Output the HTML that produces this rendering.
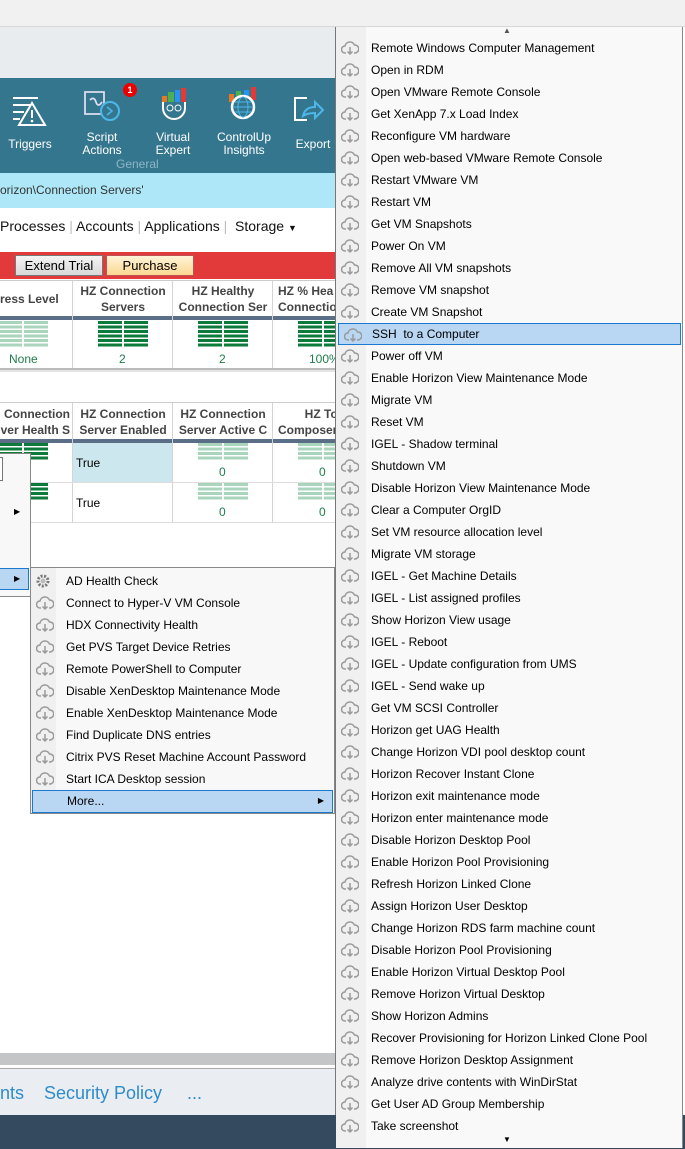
<!DOCTYPE html>
<html><head><meta charset="utf-8"><style>
*{margin:0;padding:0;box-sizing:border-box}
body{width:685px;height:1149px;position:relative;overflow:hidden;background:#fff;font-family:"Liberation Sans",sans-serif;font-size:12px;color:#000}
.a{position:absolute}
.bar{position:absolute;width:50px;height:27px;background:repeating-linear-gradient(#0b7a3a 0 3px,#fff 3px 4.5px)}
.bar.l{background:repeating-linear-gradient(#a9d5bc 0 3px,#fff 3px 4.5px)}
.bar:after{content:"";position:absolute;left:24px;top:0;width:2px;height:100%;background:#fff}
.hd{position:absolute;text-align:center;font-weight:bold;color:#444;font-size:12px;line-height:16px}
.vl{position:absolute;width:1px;background:#d4d4d4}
.mi{position:absolute;left:0;right:0;height:22px;line-height:22px;font-size:12px;color:#000}
.mi svg{position:absolute;left:5px;top:4px}
.sel{background:#b9d6f3;border:1px solid #1b7ad0}
.tb{color:#fff;font-size:12px;text-align:center;line-height:13px}
</style></head><body>
<div class="a" style="left:0;top:0;width:685px;height:27px;background:#f1f1f1;border-bottom:1px solid #d8d8d8"></div>
<div class="a" style="left:0;top:27px;width:335px;height:51px;background:#e9ecef"></div>
<div class="a" style="left:0;top:78px;width:335px;height:95px;background:#35768f"></div>
<svg class="a" style="left:10px;top:95px" width="38" height="36"><g stroke="#fff" stroke-width="2" fill="none"><line x1="3" y1="3" x2="28" y2="3"/><line x1="3" y1="10" x2="20" y2="10"/><line x1="3" y1="17" x2="14" y2="17"/><line x1="3" y1="24" x2="10" y2="24"/><path d="M22 8 L35 30 H9 Z"/><line x1="22" y1="15" x2="22" y2="23"/></g><circle cx="22" cy="26" r="1.3" fill="#fff"/></svg>
<div class="a tb" style="left:5px;top:138px;width:50px">Triggers</div>
<svg class="a" style="left:82px;top:88px" width="40" height="36"><g stroke="#dde" stroke-width="1.8" fill="none"><path d="M3 4 H22 V26 H3 Z"/><path d="M8 12 q4 -4 6 2 q2 6 6 0"/></g><circle cx="28" cy="23" r="9" fill="#35768f" stroke="#4cb7e8" stroke-width="2"/><path d="M25 19 l5 4 l-5 4" stroke="#4cb7e8" stroke-width="1.6" fill="none"/></svg>
<div class="a" style="left:123px;top:83px;width:14px;height:14px;border-radius:7px;background:#e00;color:#fff;font-size:9px;font-weight:bold;text-align:center;line-height:14px">1</div>
<div class="a tb" style="left:76px;top:131px;width:52px">Script<br>Actions</div>
<div class="a" style="left:116px;top:157px;width:40px;color:#8db6c6;font-size:12px">General</div>
<svg class="a" style="left:158px;top:86px" width="34" height="36"><rect x="4" y="10" width="5" height="6" fill="#e87722"/><rect x="10" y="6" width="6" height="10" fill="#4caf50"/><rect x="17" y="4" width="5" height="12" fill="#2196f3"/><rect x="23" y="2" width="5" height="14" fill="#e53935"/><path d="M5 16 v6 a11 11 0 0 0 22 0 v-6" stroke="#fff" stroke-width="2" fill="none"/><circle cx="12" cy="22" r="3" stroke="#fff" fill="none"/><circle cx="20" cy="22" r="3" stroke="#fff" fill="none"/></svg>
<div class="a tb" style="left:148px;top:131px;width:50px">Virtual<br>Expert</div>
<svg class="a" style="left:226px;top:86px" width="36" height="36"><rect x="3" y="8" width="5" height="8" fill="#e87722"/><rect x="10" y="5" width="5" height="5" fill="#4caf50"/><rect x="18" y="4" width="5" height="6" fill="#2196f3"/><rect x="25" y="1" width="5" height="13" fill="#e53935"/><circle cx="17" cy="21" r="11" fill="#35768f" stroke="#fff" stroke-width="2.5"/><g stroke="#4cb7e8" fill="none"><ellipse cx="17" cy="21" rx="5" ry="10"/><line x1="7" y1="21" x2="27" y2="21"/><line x1="9" y1="16" x2="25" y2="16"/><line x1="9" y1="26" x2="25" y2="26"/></g></svg>
<div class="a tb" style="left:212px;top:131px;width:64px">ControlUp<br>Insights</div>
<svg class="a" style="left:293px;top:96px" width="36" height="34"><path d="M14 2 H2 V24 H14" stroke="#fff" stroke-width="2" fill="none"/><path d="M10 20 q2 -9 12 -9 v-5 l8 8 l-8 8 v-5 q-8 0 -12 3z" stroke="#4cb7e8" stroke-width="2" fill="none"/></svg>
<div class="a tb" style="left:290px;top:138px;width:46px">Export</div>
<div class="a" style="left:0;top:173px;width:335px;height:35px;background:#aee8f8;line-height:35px;color:#333;font-size:12px">orizon\Connection Servers'</div>
<div class="a" style="left:0;top:218px;font-size:14px;color:#111;white-space:nowrap">Processes <span style="color:#bbb">|</span> Accounts <span style="color:#bbb">|</span> Applications <span style="color:#bbb">|</span> &nbsp;Storage <span style="font-size:9px">▼</span></div>
<div class="a" style="left:0;top:252px;width:335px;height:27px;background:#e2393a"></div>
<div class="a" style="left:15px;top:255px;width:88px;height:21px;background:linear-gradient(#f4f4f4,#d8d8d8);border:1px solid #777;font-size:13px;text-align:center;line-height:19px">Extend Trial</div>
<div class="a" style="left:106px;top:255px;width:88px;height:21px;background:linear-gradient(#fff4d8,#fbd891);border:1px solid #b55;font-size:13px;text-align:center;line-height:19px">Purchase</div>
<div class="a" style="left:0;top:280px;width:335px;height:1px;background:#ccc"></div>
<div class="hd" style="left:0;top:291px;width:72px;text-align:left;white-space:nowrap">ress Level</div>
<div class="hd" style="left:73px;top:283px;width:100px">HZ Connection<br>Servers</div>
<div class="hd" style="left:173px;top:283px;width:100px">HZ Healthy<br>Connection Ser</div>
<div class="hd" style="left:273px;top:283px;width:100px;text-align:left;padding-left:5px;white-space:nowrap">HZ % Hea<br>Connectio</div>
<div class="a" style="left:0;top:316px;width:335px;height:4px;background:#5a6e87"></div>
<div class="vl" style="left:72px;top:281px;height:88px"></div><div class="vl" style="left:172px;top:281px;height:88px"></div><div class="vl" style="left:272px;top:281px;height:88px"></div>
<div class="bar l" style="left:-2px;top:321px"></div>
<div class="bar" style="left:98px;top:321px"></div><div class="bar" style="left:198px;top:321px"></div><div class="bar" style="left:298px;top:321px"></div>
<div class="a" style="left:9px;top:352px;color:#1d7d4a">None</div>
<div class="a" style="left:119px;top:352px;color:#1d7d4a">2</div>
<div class="a" style="left:219px;top:352px;color:#1d7d4a">2</div>
<div class="a" style="left:309px;top:352px;color:#1d7d4a">100%</div>
<div class="a" style="left:0;top:368px;width:335px;height:2px;background:#bbb"></div>
<div class="a" style="left:0;top:370px;width:335px;height:2px;background:#e4e4e4"></div>
<div class="a" style="left:0;top:402px;width:335px;height:1px;background:#ccc"></div>
<div class="hd" style="left:0;top:406px;width:70px;text-align:right;white-space:nowrap;overflow:hidden">Connection<br>ver Health S</div>
<div class="hd" style="left:73px;top:406px;width:100px">HZ Connection<br>Server Enabled</div>
<div class="hd" style="left:173px;top:406px;width:100px">HZ Connection<br>Server Active C</div>
<div class="hd" style="left:273px;top:406px;width:70px;text-align:left;padding-left:5px;white-space:nowrap">&nbsp;&nbsp;&nbsp;&nbsp;&nbsp;&nbsp;&nbsp;&nbsp;HZ Tot<br>Composer</div>
<div class="a" style="left:0;top:439px;width:335px;height:4px;background:#5a6e87"></div>
<div class="a" style="left:73px;top:443px;width:99px;height:39px;background:#cde7ee"></div>
<div class="vl" style="left:72px;top:403px;height:119px"></div><div class="vl" style="left:172px;top:403px;height:119px"></div><div class="vl" style="left:272px;top:403px;height:119px"></div>
<div class="a" style="left:0;top:482px;width:335px;height:1px;background:#ddd"></div>
<div class="a" style="left:0;top:522px;width:335px;height:1px;background:#ddd"></div>
<div class="bar" style="left:-2px;top:443px;height:18px"></div><div class="bar" style="left:-2px;top:483px;height:18px"></div>
<div class="a" style="left:76px;top:456px">True</div><div class="a" style="left:76px;top:496px">True</div>
<div class="bar l" style="left:198px;top:443px;height:18px"></div><div class="bar l" style="left:298px;top:443px;height:18px"></div>
<div class="bar l" style="left:198px;top:483px;height:18px"></div><div class="bar l" style="left:298px;top:483px;height:18px"></div>
<div class="a" style="left:219px;top:465px;color:#1d7d4a">0</div><div class="a" style="left:319px;top:465px;color:#1d7d4a">0</div>
<div class="a" style="left:219px;top:505px;color:#1d7d4a">0</div><div class="a" style="left:319px;top:505px;color:#1d7d4a">0</div>
<div class="a" style="left:-1px;top:453px;width:32px;height:144px;background:#f8f8f8;border:1px solid #888"></div>
<div class="a" style="left:-3px;top:457px;width:6px;height:24px;border:1px solid #777;background:#fff"></div>
<div class="a" style="left:14px;top:507px;font-size:8px">▶</div>
<div class="a" style="left:-1px;top:568px;width:30px;height:22px;background:#b9d6f3;border:1px solid #1b7ad0"></div>
<div class="a" style="left:14px;top:574px;font-size:8px">▶</div>
<div class="a" style="left:30px;top:567px;width:305px;height:247px;background:#f8f8f8;border:1px solid #888">
<div class="a" style="left:0;top:0;width:25px;height:245px;background:#f0f0f0"></div>
<div id="sub"></div>
</div>
<div class="a" style="left:335px;top:27px;width:1px;height:1090px;background:#777"></div>
<div class="a" style="left:0;top:1053px;width:335px;height:12px;background:#c4c5c7"></div>
<div class="a" style="left:0;top:1068px;width:335px;height:1px;background:#aaa"></div>
<div class="a" style="left:0;top:1069px;width:335px;height:46px;background:#eaeef2"></div>
<div class="a" style="left:0;top:1083px;font-size:18px;color:#2d8cc9;white-space:nowrap">nts&nbsp;&nbsp;&nbsp; Security Policy&nbsp;&nbsp;&nbsp;&nbsp; ...</div>
<div class="a" style="left:0;top:1115px;width:685px;height:34px;background:#334a5f"></div>
<div class="a" style="left:336px;top:27px;width:347px;height:1121px;background:#f9f9f9;border-right:1px solid #888">
<div class="a" style="left:0;top:0;width:30px;height:1121px;background:#f0f0f0"></div>
<div class="a" style="left:167px;top:-1px;font-size:8px;color:#555">▲</div>
<div class="a" style="left:167px;top:1108px;font-size:8px;color:#000">▼</div>
<div id="big" class="a" style="left:0;top:10px;width:346px"></div>
</div>
<script>
var ic='<svg width="18" height="15" viewBox="0 0 18 15"><path d="M5 12 H4 a3.5 3.5 0 0 1 0-7 a5 5 0 0 1 9.5-1 a3.5 3.5 0 0 1 0.5 8 H13" fill="none" stroke="#999" stroke-width="1.5"/><path d="M9 6 v7 M6.5 10.5 l2.5 2.5 l2.5-2.5" fill="none" stroke="#999" stroke-width="1.5"/></svg>';
var big=["Remote Windows Computer Management","Open in RDM","Open VMware Remote Console","Get XenApp 7.x Load Index","Reconfigure VM hardware","Open web-based VMware Remote Console","Restart VMware VM","Restart VM","Get VM Snapshots","Power On VM","Remove All VM snapshots","Remove VM snapshot","Create VM Snapshot","SSH&nbsp; to a Computer","Power off VM","Enable Horizon View Maintenance Mode","Migrate VM","Reset VM","IGEL - Shadow terminal","Shutdown VM","Disable Horizon View Maintenance Mode","Clear a Computer OrgID","Set VM resource allocation level","Migrate VM storage","IGEL - Get Machine Details","IGEL - List assigned profiles","Show Horizon View usage","IGEL - Reboot","IGEL - Update configuration from UMS","IGEL - Send wake up","Get VM SCSI Controller","Horizon get UAG Health","Change Horizon VDI pool desktop count","Horizon Recover Instant Clone","Horizon exit maintenance mode","Horizon enter maintenance mode","Disable Horizon Desktop Pool","Enable Horizon Pool Provisioning","Refresh Horizon Linked Clone","Assign Horizon User Desktop","Change Horizon RDS farm machine count","Disable Horizon Pool Provisioning","Enable Horizon Virtual Desktop Pool","Remove Horizon Virtual Desktop","Show Horizon Admins","Recover Provisioning for Horizon Linked Clone Pool","Remove Horizon Desktop Assignment","Analyze drive contents with WinDirStat","Get User AD Group Membership","Take screenshot"];
var h="";big.forEach(function(t,i){h+='<div class="mi'+(i==13?' sel':'')+'" style="top:'+(i*22)+'px;'+(i==13?'left:2px;right:1px;':'')+'">'+ic+'<span style="position:absolute;left:'+(i==13?33:35)+'px;top:'+(i==13?-1:0)+'px">'+t+'</span></div>'});
document.getElementById("big").innerHTML=h;
var sub=["AD Health Check","Connect to Hyper-V VM Console","HDX Connectivity Health","Get PVS Target Device Retries","Remote PowerShell to Computer","Disable XenDesktop Maintenance Mode","Enable XenDesktop Maintenance Mode","Find Duplicate DNS entries","Citrix PVS Reset Machine Account Password","Start ICA Desktop session"];
h="";sub.forEach(function(t,i){var g=i==0?'<svg width="16" height="16" viewBox="0 0 16 16" style="position:absolute;left:4px;top:3px"><circle cx="8" cy="8" r="5" fill="none" stroke="#777" stroke-width="3" stroke-dasharray="2 1.5"/><circle cx="8" cy="8" r="2.5" fill="#bbb"/></svg>':ic;h+='<div class="mi" style="top:'+(2+i*22)+'px">'+g+'<span style="position:absolute;left:35px">'+t+'</span></div>'});
h+='<div class="mi sel" style="top:222px;left:1px;right:1px;height:23px"><span style="position:absolute;left:34px;top:-1px">More...</span><span style="position:absolute;right:8px;top:-1px;font-size:8px">▶</span></div>';
document.getElementById("sub").innerHTML=h;
</script>
</body></html>
